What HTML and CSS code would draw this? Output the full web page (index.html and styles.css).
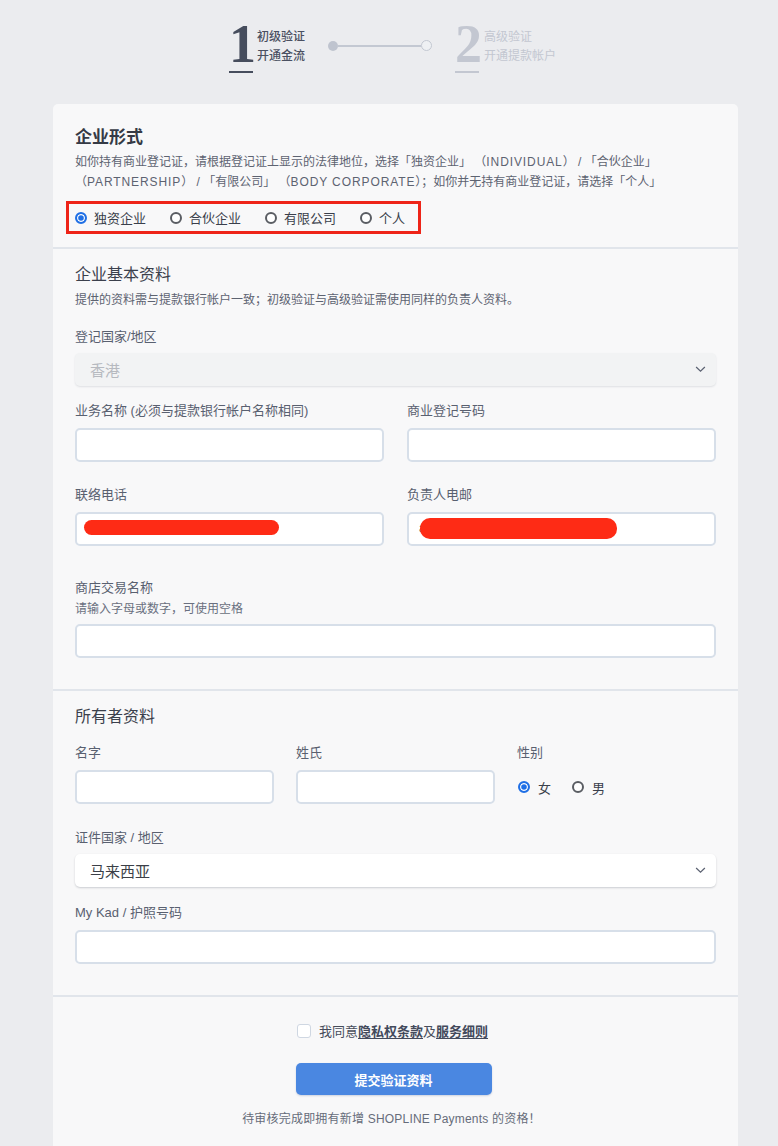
FILE: index.html
```html
<!DOCTYPE html>
<html lang="zh-CN">
<head>
<meta charset="utf-8">
<title>初级验证</title>
<link rel="stylesheet" href="styles.css">
</head>
<body>
<div class="steps">
  <div class="step active">
    <div class="step-num">1</div>
    <div class="step-text"><div>初级验证</div><div>开通金流</div></div>
  </div>
  <div class="connector"><span class="dot"></span><span class="line"></span><span class="ring"></span></div>
  <div class="step todo">
    <div class="step-num">2</div>
    <div class="step-text"><div>高级验证</div><div>开通提款帐户</div></div>
  </div>
</div>

<div class="card">
  <section class="sec sec-type">
    <h2 class="title-bold">企业形式</h2>
    <p class="desc">如你持有商业登记证，请根据登记证上显示的法律地位，选择「独资企业」 （<span class="en">INDIVIDUAL</span>） / 「合伙企业」<br>（<span class="en">PARTNERSHIP</span>） / 「有限公司」 （<span class="en">BODY CORPORATE</span>）；如你并无持有商业登记证，请选择「个人」</p>
    <div class="type-radios">
      <label class="radio"><span class="dot-r checked"></span>独资企业</label>
      <label class="radio"><span class="dot-r"></span>合伙企业</label>
      <label class="radio"><span class="dot-r"></span>有限公司</label>
      <label class="radio"><span class="dot-r"></span>个人</label>
    </div>
  </section>

  <section class="sec sec-basic">
    <h3 class="title">企业基本资料</h3>
    <p class="desc small">提供的资料需与提款银行帐户一致；初级验证与高级验证需使用同样的负责人资料。</p>
    <div class="field f-country">
      <div class="label">登记国家/地区</div>
      <div class="select disabled"><span>香港</span><svg class="chev" viewBox="0 0 12 8" width="11" height="7"><path d="M1 1.2l5 4.8 5-4.8" fill="none" stroke="#5c6272" stroke-width="1.4"/></svg></div>
    </div>
    <div class="row2 r1">
      <div class="field"><div class="label">业务名称 (必须与提款银行帐户名称相同)</div><div class="input"></div></div>
      <div class="field"><div class="label">商业登记号码</div><div class="input"></div></div>
    </div>
    <div class="row2 r2">
      <div class="field"><div class="label">联络电话</div><div class="input redact-wrap"><span class="redact r-phone"></span></div></div>
      <div class="field"><div class="label">负责人电邮</div><div class="input redact-wrap"><span class="peek">a</span><span class="redact r-mail"></span></div></div>
    </div>
    <div class="field f-shop">
      <div class="label">商店交易名称</div>
      <div class="hint">请输入字母或数字，可使用空格</div>
      <div class="input"></div>
    </div>
  </section>

  <section class="sec sec-owner">
    <h3 class="title">所有者资料</h3>
    <div class="row3">
      <div class="field"><div class="label">名字</div><div class="input"></div></div>
      <div class="field"><div class="label">姓氏</div><div class="input"></div></div>
      <div class="field"><div class="label">性别</div>
        <div class="gender">
          <label class="radio"><span class="dot-r checked"></span>女</label>
          <label class="radio"><span class="dot-r"></span>男</label>
        </div>
      </div>
    </div>
    <div class="field f-idc">
      <div class="label">证件国家 / 地区</div>
      <div class="select"><span>马来西亚</span><svg class="chev" viewBox="0 0 12 8" width="11" height="7"><path d="M1 1.2l5 4.8 5-4.8" fill="none" stroke="#5c6272" stroke-width="1.4"/></svg></div>
    </div>
    <div class="field f-kad">
      <div class="label">My Kad / 护照号码</div>
      <div class="input"></div>
    </div>
  </section>

  <section class="sec sec-submit">
    <label class="agree"><span class="box"></span>我同意<a>隐私权条款</a>及<a>服务细则</a></label>
    <button class="btn">提交验证资料</button>
    <p class="note">待审核完成即拥有新增 SHOPLINE Payments 的资格！</p>
  </section>
</div>
</body>
</html>
```

FILE: styles.css
```css
* { box-sizing: border-box; }
html, body { margin: 0; padding: 0; }
body {
  background: #ebecef;
  font-family: "Liberation Sans", "Noto Sans CJK SC", sans-serif;
  color: #3c4250;
  width: 778px;
  height: 1146px;
  overflow: hidden;
}

/* steps */
.steps {
  display: flex;
  align-items: flex-start;
  padding: 20px 0 0 229px;
  height: 104px;
}
.step { display: flex; align-items: flex-start; }
.step-num {
  font-family: "Liberation Serif", serif;
  font-weight: bold;
  font-size: 54px;
  line-height: 44px;
  height: 53px;
  width: 24px;
  text-align: center;
  border-bottom: 2px solid currentColor;
  padding-top: 2px;
}
.step-text {
  margin-left: 4px;
  padding-top: 8px;
  font-size: 12px;
  line-height: 19px;
  font-weight: 500;
  white-space: nowrap;
}
.step.active { color: #4a5061; }
.step.active .step-num { color: #464d5d; }
.step.todo { color: #c3c7d1; }
.step.todo .step-text { font-weight: 400; margin-left: 5px; }
.connector {
  display: flex;
  align-items: center;
  margin: 20px 23px 0 23px;
  width: 104px;
}
.connector .dot { width: 10px; height: 10px; border-radius: 50%; background: #bfc4cf; flex: none; }
.connector .line { flex: 1; height: 2px; background: #c3c8d2; }
.connector .ring { width: 11px; height: 11px; border-radius: 50%; border: 1.5px solid #c3c8d2; background: #eef0f3; flex: none; }

/* card */
.card {
  margin-left: 53px;
  width: 685px;
  background: #f8f8f9;
  border-radius: 5px 5px 0 0;
  min-height: 1042px;
}
.sec { padding: 0 22px; border-top: 2px solid #e1e5eb; }
.sec:first-child { border-top: 0; }
.sec-type { padding-top: 22px; padding-bottom: 13px; }
.title-bold { margin: 0; font-size: 17px; line-height: 24px; font-weight: bold; color: #353a45; }
.title { margin: 0; font-size: 16px; line-height: 22px; font-weight: 400; color: #3b404c; }
.desc { margin: 2px 0 0; font-size: 12px; line-height: 20px; color: #5d6371; white-space: nowrap; }
.desc .en { letter-spacing: 0.9px; }
.desc.small { line-height: 18px; margin-top: 5px; }

.type-radios {
  display: inline-flex;
  align-items: center;
  margin: 9px 0 0 -9px;
  border: 3px solid #ee2418;
  height: 33px;
  width: 355px;
  padding-left: 6px;
}
.radio { display: inline-flex; align-items: center; font-size: 13px; color: #3a3f4b; white-space: nowrap; flex: none; }
.type-radios .radio { margin-right: 24px; }
.dot-r {
  width: 12px; height: 12px; border-radius: 50%;
  border: 2px solid #5a5d63;
  margin-right: 7px;
  background: #fff;
  flex: none;
}
.dot-r.checked { border-color: #1f6fe5; background: #1f6fe5; box-shadow: inset 0 0 0 1.2px #fff; }

/* fields */
.sec-basic { padding-top: 15px; padding-bottom: 31px; }
.label { font-size: 13px; line-height: 18px; color: #596070; margin-bottom: 8px; white-space: nowrap; }
.hint { font-size: 12px; line-height: 18px; color: #6a7080; margin: 3px 0 6px; }
.f-country { margin-top: 19px; }
.f-country .label { margin-bottom: 7px; }
.select {
  height: 33px;
  border-radius: 5px;
  background: #fff;
  box-shadow: 0 1px 2px rgba(40, 50, 70, 0.22);
  display: flex; align-items: center; justify-content: space-between;
  padding: 0 10px 0 15px;
  font-size: 15px;
  color: #333;
}
.select.disabled { background: #f2f3f4; color: #b6b9bf; box-shadow: 0 1px 2px rgba(40, 50, 70, 0.12); }
.input {
  height: 34px;
  border: 2px solid #d7dfe9;
  border-radius: 5px;
  background: #fff;
}
.row2 { display: grid; grid-template-columns: 1fr 1fr; gap: 23px; }
.r1 { margin-top: 16px; }
.r2 { margin-top: 24px; }
.f-shop { margin-top: 33px; }
.f-shop .label { margin-bottom: 0; }

.redact-wrap { position: relative; overflow: hidden; }
.redact { position: absolute; background: #fe2b15; border-radius: 10px; }
.r-phone { left: 7px; top: 6px; width: 195px; height: 15px; }
.r-mail { left: 11px; top: 4px; width: 197px; height: 21px; }
.peek { position: absolute; left: 10px; top: 7px; font-size: 12px; color: #555; }

/* owner */
.sec-owner { padding-top: 15px; padding-bottom: 31px; }
.row3 { display: grid; grid-template-columns: repeat(3, 1fr); gap: 22px; margin-top: 16px; }
.gender { height: 34px; display: flex; align-items: center; padding-left: 1px; }
.gender .radio { margin-right: 21px; }
.gender .dot-r { margin-right: 8px; }
.f-idc { margin-top: 25px; }
.f-idc .label { margin-bottom: 7px; }
.f-idc .select { font-size: 15px; color: #3b3f47; }
.f-kad { margin-top: 17px; }

/* submit */
.sec-submit {
  padding-top: 24px;
  padding-bottom: 30px;
  display: flex; flex-direction: column; align-items: center;
}
.agree { display: flex; align-items: center; font-size: 13px; color: #474d5b; margin-left: -6px; }
.agree .box { width: 14px; height: 14px; border: 1.5px solid #cfd7e2; border-radius: 3px; background: #fff; margin-right: 8px; }
.agree a { color: #434a5c; font-weight: bold; text-decoration: underline; text-underline-offset: 2px; }
.btn {
  margin-top: 23px;
  margin-left: -4px;
  width: 196px; height: 32px;
  border: 0; border-radius: 5px;
  background: #4a87e1;
  color: #fff;
  font-family: "Liberation Serif", "Noto Sans CJK SC", serif;
  font-weight: bold;
  font-size: 13px;
  box-shadow: 0 1px 2px rgba(30, 60, 120, 0.2);
}
.note { margin: 15px 0 0; font-size: 12px; line-height: 18px; color: #666c7a; margin-left: -8px; letter-spacing: 0.2px; }
```
